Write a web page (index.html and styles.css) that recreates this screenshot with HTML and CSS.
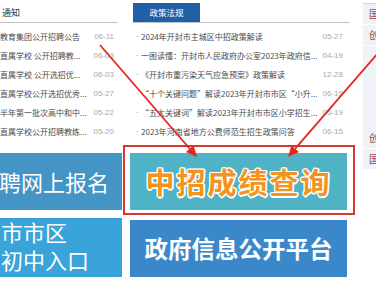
FILE: index.html
```html
<!DOCTYPE html>
<html lang="zh-CN">
<head>
<meta charset="utf-8">
<title>开封教育</title>
<link rel="stylesheet" href="styles.css">
</head>
<body>
<div class="page">
  <div class="main">
    <div class="top">
      <section class="col-left">
        <div class="head-left"><span class="head-text">通知</span></div>
        <ul class="list">
          <li class="row"><span class="title">教育集团公开招聘公告</span><span class="date">06-11</span></li>
          <li class="row"><span class="title">直属学校 公开招聘教...</span><span class="date">06-03</span></li>
          <li class="row"><span class="title">直属学校 公开选招优...</span><span class="date">06-03</span></li>
          <li class="row"><span class="title">直属学校公开选招优秀...</span><span class="date">05-27</span></li>
          <li class="row"><span class="title">半年第一批次高中和中...</span><span class="date">05-22</span></li>
          <li class="row"><span class="title">直属学校公开招聘教练...</span><span class="date">05-20</span></li>
        </ul>
      </section>
      <section class="col-mid">
        <div class="tabbar"><span class="tab">政策法规</span></div>
        <ul class="list">
          <li class="row"><span class="dot">·</span><span class="title">2024年开封市主城区中招政策解读</span><span class="date">05-27</span></li>
          <li class="row"><span class="dot">·</span><span class="title">一图读懂：开封市人民政府办公室2023年政府信...</span><span class="date">04-19</span></li>
          <li class="row"><span class="dot">·</span><span class="title">《开封市重污染天气应急预案》政策解读</span><span class="date">12-28</span></li>
          <li class="row"><span class="dot">·</span><span class="title">“十个关键问题”解读2023年开封市市区“小升...</span><span class="date">06-19</span></li>
          <li class="row"><span class="dot">·</span><span class="title">“五大关键词”解读2023年开封市市区小学招生...</span><span class="date">06-19</span></li>
          <li class="row"><span class="dot">·</span><span class="title">2023年河南省地方公费师范生招生政策问答</span><span class="date">06-15</span></li>
        </ul>
      </section>
    </div>
    <div class="bottom">
      <div class="banners-left">
        <div class="banner banner-reg">聘网上报名</div>
        <div class="banner banner-entry"><div class="entry-line">市市区</div><div class="entry-line">初中入口</div></div>
      </div>
      <div class="banners-mid">
        <div class="frame"><div class="banner banner-score">中招成绩查询</div></div>
        <div class="banner banner-gov">政府信息公开平台</div>
      </div>
    </div>
  </div>
  <aside class="side">
    <div class="side-row">国</div>
    <div class="side-row">创</div>
    <div class="side-fill"></div>
    <div class="side-row">创</div>
    <div class="side-row">国</div>
  </aside>
  <svg class="arrows" width="376" height="282" viewBox="0 0 376 282">
    <line x1="100" y1="45" x2="190" y2="149" stroke="#e3261f" stroke-width="1.8"/>
    <polygon points="197,157 186,151.9 193.6,145.4" fill="#e3261f"/>
    <line x1="378" y1="53" x2="295.2" y2="148.7" stroke="#e3261f" stroke-width="1.8"/>
    <polygon points="288,157 291.4,145.4 299,152" fill="#e3261f"/>
  </svg>
</div>
</body>
</html>
```
FILE: styles.css
```css
* { box-sizing: border-box; }
html, body { margin: 0; padding: 0; }
body {
  width: 376px;
  height: 282px;
  overflow: hidden;
  background: #fff;
  font-family: "Noto Sans CJK SC", "Noto Sans", sans-serif;
  color: #555;
}
.page {
  position: relative;
  display: flex;
  width: 376px;
  height: 282px;
  overflow: hidden;
}
.main {
  display: flex;
  flex-direction: column;
  width: 355px;
  flex: none;
}
.top {
  display: flex;
  height: 145px;
  gap: 15px;
}
.col-left {
  width: 118px;
  overflow: hidden;
  flex: none;
}
.head-left {
  height: 23px;
  padding-top: 3px;
  border-bottom: 1px solid #b8c5cd;
}
.head-text {
  display: block;
  padding-left: 2px;
  font-size: 9px;
  line-height: 19px;
  color: #333;
  white-space: nowrap;
}
.col-mid {
  width: 217px;
  flex: none;
}
.tabbar {
  height: 23px;
  padding-top: 3px;
  border-bottom: 1px solid #b8c5cd;
}
.tab {
  display: block;
  width: 67px;
  height: 19px;
  background: #215fa7;
  color: #fff;
  font-size: 8.5px;
  line-height: 19px;
  text-align: center;
}
.list {
  list-style: none;
  margin: 0;
  padding: 4px 0 0;
}
.row {
  display: flex;
  align-items: center;
  height: 19px;
  font-size: 8px;
  line-height: 19px;
  white-space: nowrap;
}
.col-left .row { padding-right: 4px; }
.col-mid .row { padding-right: 7px; }
.dot {
  width: 8px;
  flex: none;
  padding-left: 3px;
  font-family: "Liberation Sans", sans-serif;
  color: #777;
}
.title {
  flex: 0 1 auto;
  min-width: 0;
  overflow: hidden;
  color: #4a4a4a;
}
.date {
  margin-left: auto;
  padding-left: 4px;
  color: #a9a9a9;
  font-family: "Liberation Sans", "Noto Sans", sans-serif;
  font-size: 8px;
}
.bottom {
  display: flex;
  gap: 1px;
}
.banners-left {
  width: 122px;
  flex: none;
  display: flex;
  flex-direction: column;
  gap: 8px;
  padding-top: 8px;
}
.banner {
  color: #fff;
  white-space: nowrap;
}
.banner-reg {
  height: 57px;
  background: #4494c6;
  font-size: 22px;
  line-height: 57px;
  text-indent: -1px;
}
.banner-entry {
  height: 59px;
  background: #3aa3da;
  font-size: 22px;
  padding-left: 1px;
}
.entry-line {
  height: 28px;
  line-height: 27px;
}
.banners-mid {
  width: 232px;
  flex: none;
  display: flex;
  flex-direction: column;
}
.frame {
  height: 70px;
  border: 2px solid #d7372d;
  padding: 6px 6px 3px 5px;
}
.banner-score {
  height: 57px;
  background: #50b3c5;
  color: #f39320;
  font-size: 29px;
  font-weight: 700;
  line-height: 57px;
  letter-spacing: 2px;
  text-align: center;
  text-shadow:
    1.5px 0 0 #fff, -1.5px 0 0 #fff, 0 1.5px 0 #fff, 0 -1.5px 0 #fff,
    1px 1px 0 #fff, -1px -1px 0 #fff, 1px -1px 0 #fff, -1px 1px 0 #fff;
}
.banner-gov {
  margin: 5px 0 0 7px;
  width: 217px;
  height: 57px;
  background: #3a88c9;
  font-size: 23.5px;
  font-weight: 700;
  line-height: 57px;
  text-align: center;
}
.side {
  margin: 3px 0 0 8px;
  width: 40px;
  height: 167px;
  flex: none;
  display: flex;
  flex-direction: column;
  background: #eff3f7;
  border-top: 1px solid #cdd6de;
  overflow: hidden;
}
.side-row {
  height: 21px;
  border-bottom: 1px solid #fff;
  padding-left: 6px;
  font-size: 10px;
  line-height: 20px;
  color: #a04040;
}
.side-fill {
  flex: 1;
}
.arrows {
  position: absolute;
  left: 0;
  top: 0;
  pointer-events: none;
}
```
